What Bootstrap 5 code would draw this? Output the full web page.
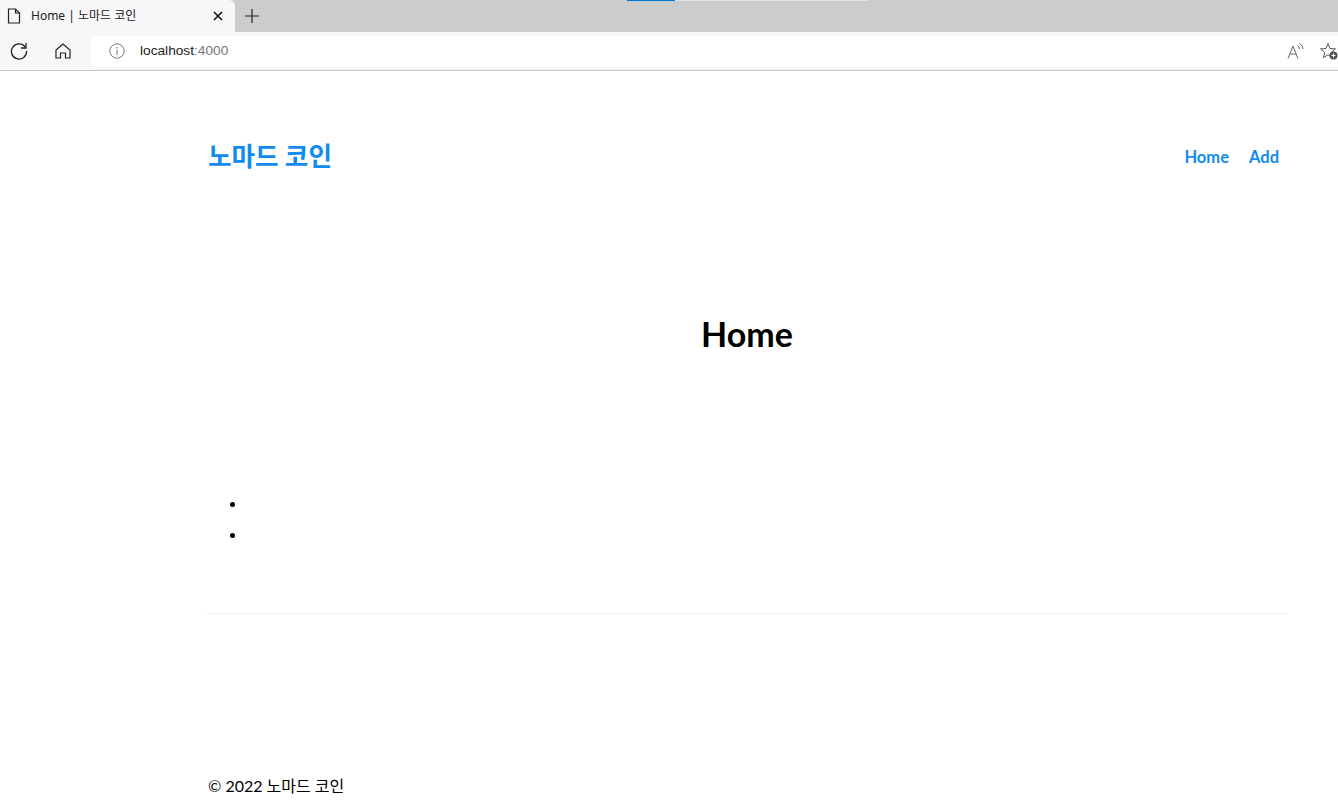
<!DOCTYPE html>
<html lang="ko">
<head>
  <meta charset="UTF-8">
  <meta name="viewport" content="width=device-width, initial-scale=1.0">
  <title>Home | 노마드 코인</title>
  <link href="https://cdn.jsdelivr.net/npm/bootstrap@5.3.0/dist/css/bootstrap.min.css" rel="stylesheet">
  <style>
    html, body { height: 811px; overflow: hidden; }
    body { background: #fff; color: #000; font-family: "Lato", "Noto Sans CJK KR", sans-serif; }
    .chrome-top { height: 32px; background: #cccccc; position: relative; }
    .load-track { position: absolute; top: 0; left: 627px; width: 241px; height: 1px; background: #e2e2e2; }
    .load-bar { width: 48px; height: 1px; background: #0078d4; }
    .tab-item { width: 235px; height: 32px; background: #f7f7f7; border-radius: 0 6px 0 0; padding: 0 12px 0 7px; font-size: 12px; font-family: "Noto Sans", "Noto Sans CJK KR", sans-serif; color: #222; }
    .tab-title { margin-left: 10px; }
    .new-tab { width: 34px; height: 32px; }
    .chrome-bar { height: 39px; background: #f7f7f7; border-bottom: 1px solid #c4c4c4; }
    .tool-btn { width: 44px; }
    .tool-btn:first-child { margin-left: -3px; }
    .addr-box { height: 31px; background: #fff; border-radius: 4px 0 0 4px; margin-left: 6px; padding-left: 18px; font-size: 13.7px; font-family: "Liberation Sans", sans-serif; color: #222; min-width: 0; }
    .addr-text { margin-left: 15px; }
    .addr-port { color: #777; }
    .page-wrap { width: 1080px; margin-left: 207px; }
    .top-nav { height: 172px; }
    .brand-link { font-size: 25.6px; font-weight: 700; color: #118bee; text-decoration: none; line-height: 1; margin-left: 1px; }
    .nav-links { gap: 20px; margin-right: 8px; }
    .nav-links a { color: #118bee; font-weight: 700; font-size: 16.500px; text-decoration: none; }
    .page-head { height: 248px; padding-top: 72px; }
    .page-head h1 { font-size: 34px; font-weight: 700; line-height: 1.1; margin: 0; }
    .coin-list { height: 122px; margin: 0; padding-left: 40px; }
    .coin-list li { height: 31px; }
    .foot-rule { border-top: 1px solid #eeeeee; padding-top: 162px; padding-left: 1px; font-size: 16px; line-height: 20px; }
  </style>
</head>
<body>

  <div class="chrome-top d-flex">
    <div class="load-track"><div class="load-bar"></div></div>
    <div class="tab-item d-flex align-items-center">
      <svg width="14" height="16" viewBox="0 0 14 16" fill="none" stroke="#222" stroke-width="1.2"><path d="M1.5 1h7l4 4v10h-11z"/><path d="M8.5 1v4h4"/></svg>
      <span class="tab-title flex-grow-1">Home | 노마드 코인</span>
      <svg width="10" height="10" viewBox="0 0 10 10" stroke="#111" stroke-width="1.6"><path d="M1 1l8 8M9 1l-8 8"/></svg>
    </div>
    <div class="new-tab d-flex align-items-center justify-content-center">
      <svg width="14" height="14" viewBox="0 0 14 14" stroke="#222" stroke-width="1.2"><path d="M7 0v14M0 7h14"/></svg>
    </div>
  </div>

  <div class="chrome-bar d-flex align-items-center">
    <div class="tool-btn d-flex justify-content-center">
      <svg width="18" height="18" viewBox="0 0 18 18" fill="none" stroke="#222" stroke-width="1.3"><path d="M15.500 5.500A7.600 7.600 0 1 0 16.600 9"/><path d="M16 1v5h-5"/></svg>
    </div>
    <div class="tool-btn d-flex justify-content-center">
      <svg width="16" height="16" viewBox="0 0 16 16" fill="none" stroke="#222" stroke-width="1.2"><path d="M1 7l7-6 7 6v8h-4.500v-5h-5v5H1z"/></svg>
    </div>
    <div class="addr-box d-flex align-items-center flex-grow-1">
      <svg width="16" height="16" viewBox="0 0 16 16" fill="none" stroke="#777" stroke-width="1"><circle cx="8" cy="8" r="7.200"/><path d="M8 7v5M8 4v1.500"/></svg>
      <span class="addr-text flex-grow-1">localhost<span class="addr-port">:4000</span></span>
      <svg class="addr-read" width="17" height="16" viewBox="0 0 17 16" fill="none" stroke="#666" stroke-width="1"><path d="M1 15.500L6 3l5 12.500M3 11h6"/><path d="M10.500 2.500a4 4 0 0 1 2 3.500M12.500 .5a6 6 0 0 1 3.500 5.500"/></svg>
      <svg class="ms-3 me-n1" width="18" height="18" viewBox="0 0 18 18"><path d="M8 1.500l2 5 5.500.4-4.200 3.500 1.300 5.300L8 12.800l-4.600 2.900 1.300-5.300L.5 6.900 6 6.500z" fill="none" stroke="#555"/><circle cx="13.500" cy="13.500" r="4" fill="#555"/><path d="M13.500 11.500v4M11.500 13.500h4" stroke="#fff"/></svg>
    </div>
  </div>

  <div class="page-wrap">
    <nav class="top-nav d-flex justify-content-between align-items-center">
      <a class="brand-link" href="#">노마드 코인</a>
      <div class="nav-links d-flex">
        <a href="#">Home</a>
        <a href="#">Add</a>
      </div>
    </nav>
    <header class="page-head text-center">
      <h1>Home</h1>
    </header>
    <ul class="coin-list">
      <li></li>
      <li></li>
    </ul>
    <footer class="foot-rule">© 2022 노마드 코인</footer>
  </div>

</body>
</html>
